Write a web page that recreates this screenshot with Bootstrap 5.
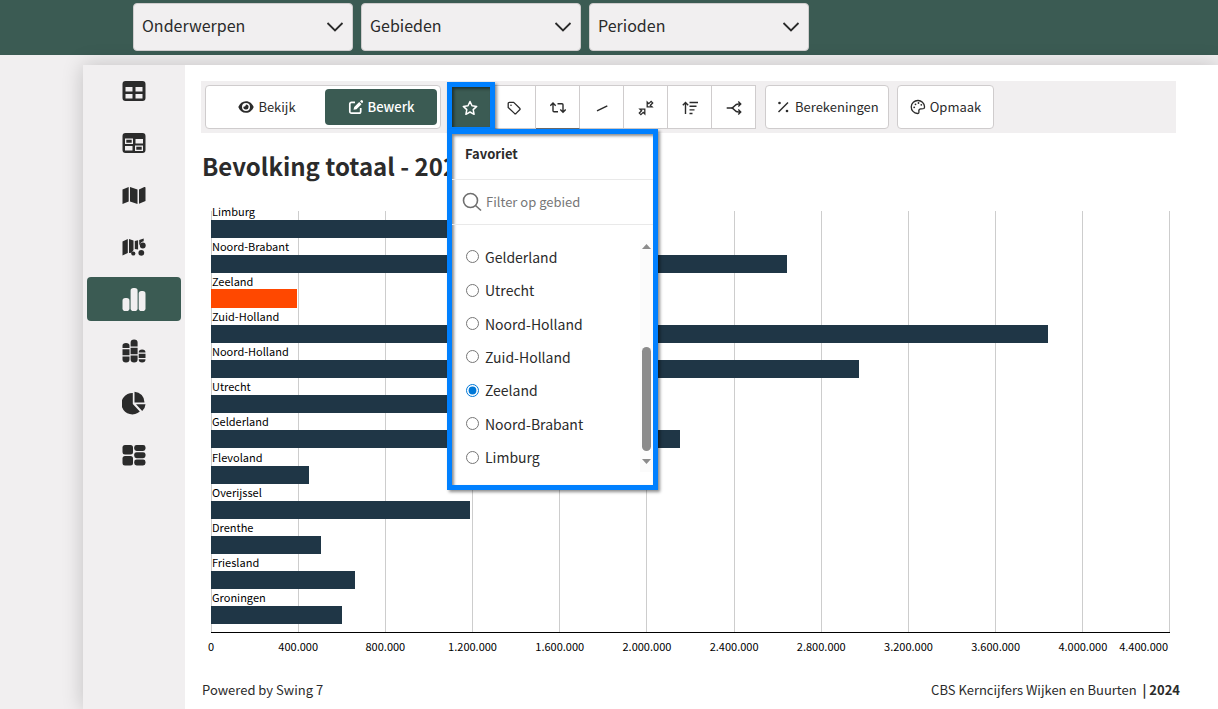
<!DOCTYPE html>
<html lang="nl">
<head>
<meta charset="utf-8">
<meta name="viewport" content="width=device-width, initial-scale=1">
<title>Bevolking totaal - 2024</title>
<link href="https://cdn.jsdelivr.net/npm/bootstrap@5.3.0/dist/css/bootstrap.min.css" rel="stylesheet">
<style>
:root { --green:#3b5b53; --ink:#2b2b2b; --soft:#f1eff0; --line:#cfcccd; --bar:#1f3646; --mark:#0080ff; }
body { font-family:"Noto Sans CJK SC",sans-serif; font-size:13px; line-height:20px; color:var(--ink); background:var(--soft); overflow-x:hidden; }
.topbar { background:var(--green); padding:3px 16px 4px 133px; }
.topbar .form-select { width:220px; height:48px; font-size:16px; line-height:24px; padding:8px 36px 12px 8px; color:var(--ink); background-color:var(--soft); border-color:var(--line); border-radius:4px;
  background-image:url("data:image/svg+xml,%3Csvg xmlns='http://www.w3.org/2000/svg' viewBox='0 0 18 12'%3E%3Cpath fill='none' stroke='%232b2b2b' stroke-width='1.8' d='M1.5 2 9 9.500 16.500 2'/%3E%3C/svg%3E"); background-size:18px 12px; background-position:right 8px center; }
.shell { margin:10px 0 0 83px; box-shadow:0 0 20px rgba(0,0,0,.2); min-height:calc(100vh - 65px); }
.side { width:102px; background:var(--soft); padding:4px; flex:none; }
.side button { height:44px; border:0; border-radius:4px; background:none; color:var(--ink); }
.side button.active { background:var(--green); color:var(--soft); }
.side svg { width:24px; height:24px; fill:currentColor; }
.main { background:#fff; padding:16px 42px 0 16px; min-width:0; }
.tools { background:var(--soft); padding:4px; height:52px; }
.box { background:#fff; border:1px solid var(--line); border-radius:4px; height:44px; color:var(--ink); font-size:13px; }
.calc { padding:0 9px; }
.style-btn { padding:0 12px; }
.modes { padding:3px; width:236px; }
.modes button { border:0; border-radius:4px; background:none; font-size:13px; color:var(--ink); flex:1 1 0; }
.modes button.active { background:var(--green); color:#fff; font-weight:500; flex:0 0 112px; }
.toolset { margin-left:-1px; margin-right:1px; }
.tool { width:44px; height:44px; background:#fff; border:1px solid var(--line); border-left:0; padding:0; color:var(--ink); }
.tool.under { border-bottom-color:#6b6b6b; }
.tool.fav { background:var(--green); color:#fff; border:0; }
.ic { width:16px; height:16px; fill:none; stroke:currentColor; stroke-width:1.3; flex:none; }
.glow { border:5px solid var(--mark); box-shadow:2px 2px 3px rgba(0,0,0,.45), inset 2px 2px 3px rgba(0,0,0,.45); }
.ring { position:absolute; inset:-3px -3px -3px -1px; pointer-events:none; z-index:4; }
.pop { position:absolute; z-index:5; left:-1px; top:44px; width:211px; background:#fff; }
.pop-head { height:46px; padding:0 13px 6px; font-weight:700; border-bottom:1px solid #e9e9e9; }
.pop-find { height:45px; padding:0 10px; gap:4px; border-bottom:1px solid #e9e9e9; }
.pop-find input { border:0; outline:0; width:100%; min-width:0; padding:0; font-size:13px; background:none; color:var(--ink); }
.pop-find input::placeholder { color:#777; opacity:1; }
.pop-list { margin:15px 0 11px; height:234px; display:grid; grid-template-rows:repeat(7,1fr); padding-left:14px; position:relative; font-size:14px; }
.pop-list label { display:flex; align-items:center; gap:6px; }
.pop-list input { width:13px; height:13px; margin:0; flex:none; accent-color:#0078d7; }
.sbar { position:absolute; right:0; top:0; width:13px; height:232px; background:#fbfbfb; }
.sbar i { width:9px; height:104px; border-radius:5px; background:#8b8b8b; position:absolute; right:2px; top:107px; }
.sbar svg { position:absolute; right:2px; width:9px; height:5px; fill:#8b8b8b; }
h1 { font-size:24px; line-height:34px; font-weight:700; margin:16px 0 0 1px; }
.chart { margin:20px 6px 0 10px; font-size:11px; line-height:17px; color:#000; }
.plot { position:relative; padding-bottom:8px; border-bottom:1px solid #000; }
.lines { position:absolute; inset:8px 0 0 0; display:grid; grid-template-columns:repeat(11,1fr); border-right:1px solid #cdcdcd; }
.lines i { border-left:1px solid #cdcdcd; }
.bars { position:relative; height:421px; display:grid; grid-template-rows:repeat(12,1fr); }
.bars span { display:block; padding-left:1px; height:17px; }
.bar { height:18px; background:var(--bar); }
.bar.hot { background:#ff4800; box-shadow:0 -1px #ff4800; }
.axis { position:relative; margin-top:5px; }
.ticks { display:grid; grid-template-columns:repeat(11,1fr); margin:0 calc(100% / 22) 0 calc(100% / -22); text-align:center; }
.axis .end { position:absolute; right:2px; top:0; }
.foot { margin:25px -4px 0 1px; }
</style>
</head>
<body>
<header class="topbar d-flex gap-2">
  <select class="form-select" aria-label="Onderwerpen"><option>Onderwerpen</option></select>
  <select class="form-select" aria-label="Gebieden"><option>Gebieden</option></select>
  <select class="form-select" aria-label="Perioden"><option>Perioden</option></select>
</header>
<div class="shell d-flex">
  <nav class="side d-flex flex-column gap-2" aria-label="Weergave">
    <button aria-label="Tabel"><svg viewBox="0 0 24 24"><path fill-rule="evenodd" d="M3.500 2h17a3 3 0 0 1 3 3v14a3 3 0 0 1-3 3h-17a3 3 0 0 1-3-3V5a3 3 0 0 1 3-3zM3.500 8v4.500h7V8zM13.500 8v4.500h7V8zM3.500 15v4.500h7V15zM13.500 15v4.500h7V15z"/></svg></button>
    <button aria-label="Kruistabel"><svg viewBox="0 0 24 24"><path fill-rule="evenodd" d="M3.500 2h17a3 3 0 0 1 3 3v14a3 3 0 0 1-3 3h-17a3 3 0 0 1-3-3V5a3 3 0 0 1 3-3zM3 7.500v5.500h8V7.500zM13.500 8v4.500h7.500V8zM3 15v4.500h7.500V15zM13 14.500v5.500h8v-5.500z"/><path d="M4.300 8.800h5.400v2.900H4.300zM14.300 15.800h5.400v2.900h-5.400z"/></svg></button>
    <button aria-label="Kaart"><svg viewBox="0 0 24 24"><path d="M.5 6.500 6.700 4v14.500L.5 21zM8 4l7.500 2.500V21L8 18.500zM17 6.500 22.300 4q1.200-.4 1.200.8V18L17 20.800z"/></svg></button>
    <button aria-label="Stippenkaart"><svg viewBox="0 0 24 24"><path d="M.5 6.500 5.800 4v14L.5 20.500zM7 4l4.500 1.600V15l-1.800 2.800L7 18zM12.800 6l3.300-.8v9.300l-3.300-.6zM17.200 5l4.500-1.500v2.700q-3.500.8-3.500 3.800l-1-.5z"/><circle cx="20.800" cy="10.500" r="2.900"/><circle cx="19.300" cy="17.800" r="2.900"/><circle cx="11.300" cy="18.500" r="2.100"/></svg></button>
    <button class="active" aria-label="Staafdiagram"><svg viewBox="0 0 24 24"><rect x=".5" y="11" width="7" height="13" rx="2.800"/><rect x="8.600" y="1" width="7" height="23" rx="2.800"/><rect x="16.700" y="4" width="6.800" height="20" rx="2.800"/></svg></button>
    <button aria-label="Gestapeld diagram"><svg viewBox="0 0 24 24"><path d="M.5 9V6.500Q.5 4 4 4t3.500 2.500V9zM.5 10.200h7v6h-7zM.5 17.400h7v3q0 3-3.500 3t-3.500-3zM8.600 7.500v-4Q8.600.5 12.100.5t3.500 3v4zM8.600 8.700h7v6.500h-7zM8.600 16.400h7v4q0 3-3.500 3t-3.500-3zM16.700 13.500q0-3 3.400-3t3.400 3zM16.700 14.700h6.800v4.300h-6.800zM16.700 20.200h6.800q0 3.200-3.400 3.200t-3.400-3.200z"/></svg></button>
    <button aria-label="Taartdiagram"><svg viewBox="0 0 24 24"><path d="M10.800 2v11l7 7.600A11 10.700 0 1 1 10.800 2z"/><path d="M12.500.7a10.500 10.500 0 0 1 10 10.800h-10zM14 13.200h9.500q-.3 4.200-3.300 6.700z"/></svg></button>
    <button aria-label="Dashboard"><svg viewBox="0 0 24 24"><rect x=".5" y="2" width="10.500" height="9.500" rx="2.500"/><rect x=".5" y="13" width="10.500" height="9.500" rx="2.500"/><rect x="12.200" y="2" width="11.300" height="6" rx="2.400"/><rect x="12.200" y="9.200" width="11.300" height="6" rx="2.400"/><rect x="12.200" y="16.500" width="11.300" height="6" rx="2.400"/></svg></button>
  </nav>
  <main class="main flex-grow-1">
    <div class="tools d-flex gap-2">
      <div class="box modes d-flex">
        <button class="d-flex align-items-center justify-content-center gap-1"><svg class="ic" viewBox="0 0 16 16"><path fill="currentColor" stroke="none" fill-rule="evenodd" d="M8 2.200c3.600 0 6.300 2.300 7.700 5.800C14.300 11.500 11.600 13.800 8 13.800S1.700 11.500.3 8C1.700 4.500 4.400 2.200 8 2.200zM8 4a4 4 0 1 0 0 8 4 4 0 0 0 0-8z"/><path fill="currentColor" stroke="none" d="M8 5.400a2.600 2.600 0 1 1-2.600 2.400Q7.600 8 8 5.400z"/></svg>Bekijk</button>
        <button class="active d-flex align-items-center justify-content-center gap-1"><svg class="ic" viewBox="0 0 16 16"><path stroke-width="1.700" d="M7 3.300H3.500a1.700 1.700 0 0 0-1.700 1.700v7.500a1.700 1.700 0 0 0 1.700 1.700H11a1.700 1.700 0 0 0 1.700-1.700V9"/><path fill="currentColor" stroke="none" d="M5.500 10.800 6.200 8l5-5L13.500 5.300l-5 5zM12 2.200l.8-.8q.9-.7 1.800.2t.2 1.800l-.8.800z"/></svg>Bewerk</button>
      </div>
      <div class="toolset d-flex">
        <div class="position-relative d-flex">
          <button class="tool fav" aria-label="Favoriet"><svg class="ic" viewBox="0 0 16 16"><path stroke-width="1.500" stroke-linejoin="round" d="m8 1.500 2 4.300 4.700.6-3.500 3.200.9 4.700L8 12l-4.100 2.300.9-4.700L1.300 6.400 6 5.800z"/></svg></button>
          <div class="ring glow"></div>
          <section class="pop glow">
            <div class="pop-head d-flex align-items-center">Favoriet</div>
            <div class="pop-find d-flex align-items-center">
              <svg class="flex-shrink-0" width="20" height="20" viewBox="0 0 20 20" fill="none" stroke="#6f6f6f" stroke-width="1.600"><circle cx="8.500" cy="8.500" r="7"/><path d="m13.500 13.500 5.500 5"/></svg>
              <input type="text" placeholder="Filter op gebied" aria-label="Filter op gebied">
            </div>
            <div class="pop-list">
              <label><input type="radio" name="g">Gelderland</label>
              <label><input type="radio" name="g">Utrecht</label>
              <label><input type="radio" name="g">Noord-Holland</label>
              <label><input type="radio" name="g">Zuid-Holland</label>
              <label><input type="radio" name="g" checked>Zeeland</label>
              <label><input type="radio" name="g">Noord-Brabant</label>
              <label><input type="radio" name="g">Limburg</label>
              <div class="sbar"><svg class="top-0 mt-1" viewBox="0 0 9 5"><path d="M0 5 4.500 0 9 5z"/></svg><i></i><svg class="bottom-0 mb-2" viewBox="0 0 9 5"><path d="M0 0h9L4.500 5z"/></svg></div>
            </div>
          </section>
        </div>
        <button class="tool" aria-label="Label"><svg class="ic" viewBox="0 0 16 16"><path stroke-linejoin="round" d="M2.200 3.600q0-1.200 1.200-1.200h4.300l6 5.800q.8.800 0 1.600l-3.600 3.600q-.8.700-1.600 0L2.200 7.500z"/><circle cx="5" cy="5.200" r=".8" fill="currentColor" stroke="none"/></svg></button>
        <button class="tool under" aria-label="Omwisselen"><svg class="ic" viewBox="0 0 16 16"><path stroke-width="1.400" d="M3 3.300v7.500q0 1 1 1h4M.3 5.800 3 3.100l2.700 2.700M7.500 3.700H12q1 0 1 1v7.300M10.300 9.500l2.700 2.700 2.700-2.700"/></svg></button>
        <button class="tool" aria-label="Lijn"><svg class="ic" viewBox="0 0 16 16"><path stroke-width="1.500" d="m3 10.800 10.300-5"/></svg></button>
        <button class="tool" aria-label="Verkleinen"><svg class="ic" viewBox="0 0 16 16"><path d="M9.200 2v4.800H14l-1.600-1.500 2.300-2.300-1.600-1.600L10.800 3.600zM6.800 14V9.200H2l1.600 1.500L1.300 13l1.600 1.600 2.300-2.200z"/></svg></button>
        <button class="tool" aria-label="Sorteren"><svg class="ic" viewBox="0 0 16 16"><path stroke-width="1.400" d="M3.500 14V2.500M.8 5.200l2.700-2.700 2.700 2.700M7.500 2.500H16M7.500 6.200h7M7.500 9.900h5M7.500 13.500h3"/></svg></button>
        <button class="tool" aria-label="Splitsen"><svg class="ic" viewBox="0 0 16 16"><path d="M.7 8h4.500Q7 8 8.500 6t4-2h2M5.200 8Q7 8 8.500 10t4 2h2M12.300 1.500 14.800 4l-2.500 2.500M12.300 9.500l2.500 2.500-2.500 2.500"/></svg></button>
      </div>
      <button class="box calc d-flex align-items-center justify-content-center gap-1"><svg class="ic" viewBox="0 0 16 16"><path stroke-width="1.500" d="M3.500 13 13 3.500"/><circle cx="4.500" cy="4" r="1.300" fill="currentColor" stroke="none"/><circle cx="12" cy="12" r="1.300" fill="currentColor" stroke="none"/></svg>Berekeningen</button>
      <button class="box style-btn d-flex align-items-center justify-content-center gap-1"><svg class="ic" viewBox="0 0 16 16"><path d="M8 1.500a6.500 6.500 0 0 0-.5 13q1.600 0 1.400-1.700-.5-2.500 1.600-3 2 .3 3.400-.3.800-.6.600-2A6.400 6.400 0 0 0 8 1.500z"/><g fill="currentColor" stroke="none"><circle cx="4.200" cy="8.300" r=".9"/><circle cx="5.500" cy="5.300" r=".9"/><circle cx="8.500" cy="4" r=".9"/><circle cx="11.300" cy="5.800" r=".9"/></g></svg>Opmaak</button>
    </div>
    <h1>Bevolking totaal - 2024</h1>
    <div class="chart">
      <div class="plot">
        <div class="lines"><i></i><i></i><i></i><i></i><i></i><i></i><i></i><i></i><i></i><i></i><i></i></div>
        <div class="bars">
          <div><span>Limburg</span><div class="bar" style="width:25.700%"></div></div>
          <div><span>Noord-Brabant</span><div class="bar" style="width:60.100%"></div></div>
          <div><span>Zeeland</span><div class="bar hot" style="width:9%"></div></div>
          <div><span>Zuid-Holland</span><div class="bar" style="width:87.300%"></div></div>
          <div><span>Noord-Holland</span><div class="bar" style="width:67.600%"></div></div>
          <div><span>Utrecht</span><div class="bar" style="width:31.700%"></div></div>
          <div><span>Gelderland</span><div class="bar" style="width:48.900%"></div></div>
          <div><span>Flevoland</span><div class="bar" style="width:10.200%"></div></div>
          <div><span>Overijssel</span><div class="bar" style="width:27%"></div></div>
          <div><span>Drenthe</span><div class="bar" style="width:11.500%"></div></div>
          <div><span>Friesland</span><div class="bar" style="width:15%"></div></div>
          <div><span>Groningen</span><div class="bar" style="width:13.700%"></div></div>
        </div>
      </div>
      <div class="axis">
        <div class="ticks"><span>0</span><span>400.000</span><span>800.000</span><span>1.200.000</span><span>1.600.000</span><span>2.000.000</span><span>2.400.000</span><span>2.800.000</span><span>3.200.000</span><span>3.600.000</span><span>4.000.000</span></div>
        <span class="end">4.400.000</span>
      </div>
    </div>
    <footer class="foot d-flex justify-content-between"><span>Powered by Swing 7</span><span>CBS Kerncijfers Wijken en Buurten&nbsp; <b>| 2024</b></span></footer>
  </main>
</div>
<script src="https://cdn.jsdelivr.net/npm/bootstrap@5.3.0/dist/js/bootstrap.bundle.min.js"></script>
</body>
</html>
